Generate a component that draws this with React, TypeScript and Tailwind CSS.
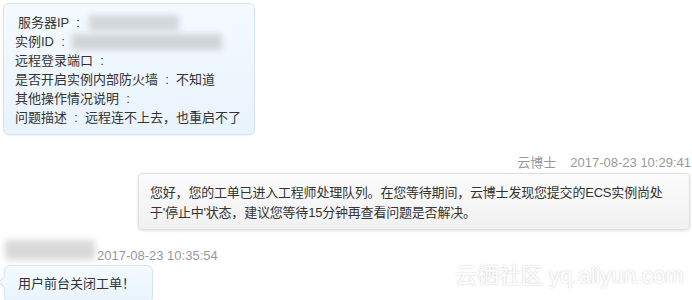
export default function App() {
  return (
    <div className="relative w-[692px] h-[300px] overflow-hidden bg-white font-['Liberation_Sans','Noto_Sans_CJK_SC',sans-serif] text-[13px] text-[#333]">
      {/* Ticket info bubble */}
      <div className="ml-[3px] mt-[3px] w-[252px] rounded-[6px] border border-[#d6e4ef] bg-gradient-to-b from-[#f4faff] to-[#e9f3fc] pl-[11px] pt-[9px] pb-[7px] leading-[19px] whitespace-pre shadow-[0_1px_2px_rgba(0,0,0,0.06)]">
        <div className="flex items-center">
          <span className="pl-[3px]">服务器IP  :  </span>
          <span className="ml-[2px] h-[16px] w-[90px] bg-[#d3d7db] blur-[3px]" />
        </div>
        <div className="flex items-center">
          <span>实例ID  :  </span>
          <span className="h-[16px] w-[150px] bg-[#d0d4d8] blur-[3px]" />
        </div>
        <div>远程登录端口  :</div>
        <div>是否开启实例内部防火墙  :  不知道</div>
        <div>其他操作情况说明  :</div>
        <div>问题描述  :  远程连不上去，也重启不了</div>
      </div>

      {/* Reply header */}
      <div className="mt-[19px] flex justify-end gap-[14px] pr-[1px] text-[13px] leading-[18px] text-[#999]">
        <span>云博士</span>
        <span>2017-08-23 10:29:41</span>
      </div>

      {/* Reply bubble */}
      <div className="ml-[138px] mt-[1px] w-[552px] rounded-[4px] border border-[#dedede] bg-gradient-to-b from-[#fbfbfb] to-[#f1f1f1] pl-[11px] pt-[9px] pb-[6px] leading-[20px] tracking-[-0.2px] shadow-[0_1px_3px_rgba(0,0,0,0.12)]">
        <div>您好，您的工单已进入工程师处理队列。在您等待期间，云博士发现您提交的ECS实例尚处</div>
        <div>于'停止中'状态，建议您等待15分钟再查看问题是否解决。</div>
      </div>

      {/* User header */}
      <div className="mt-[10px] flex items-start">
        <span className="ml-[5px] h-[20px] w-[90px] bg-[#d9d9d9] blur-[3px]" />
        <span className="ml-[2px] pt-[8px] text-[13px] leading-[16px] text-[#999]">2017-08-23 10:35:54</span>
      </div>

      {/* User bubble */}
      <div className="relative ml-[4px] mt-[1px] w-[149px] rounded-[6px] border border-[#d6e4ef] bg-gradient-to-b from-[#f4faff] to-[#e9f3fc] pl-[13px] pt-[8px] pb-[8px] leading-[20px]">
        <span className="absolute left-[-5px] top-[12px] h-[8px] w-[8px] rotate-45 border-b border-l border-[#d6e4ef] bg-[#f1f8fe]" />
        <span className="relative">用户前台关闭工单！</span>
      </div>

      {/* Watermark */}
      <div className="absolute left-[455px] top-[262px] whitespace-nowrap text-[22px] leading-[28px] text-white [text-shadow:0_0_2px_rgba(0,0,0,0.25)]">
        云栖社区 yq.aliyun.com
      </div>
    </div>
  );
}
